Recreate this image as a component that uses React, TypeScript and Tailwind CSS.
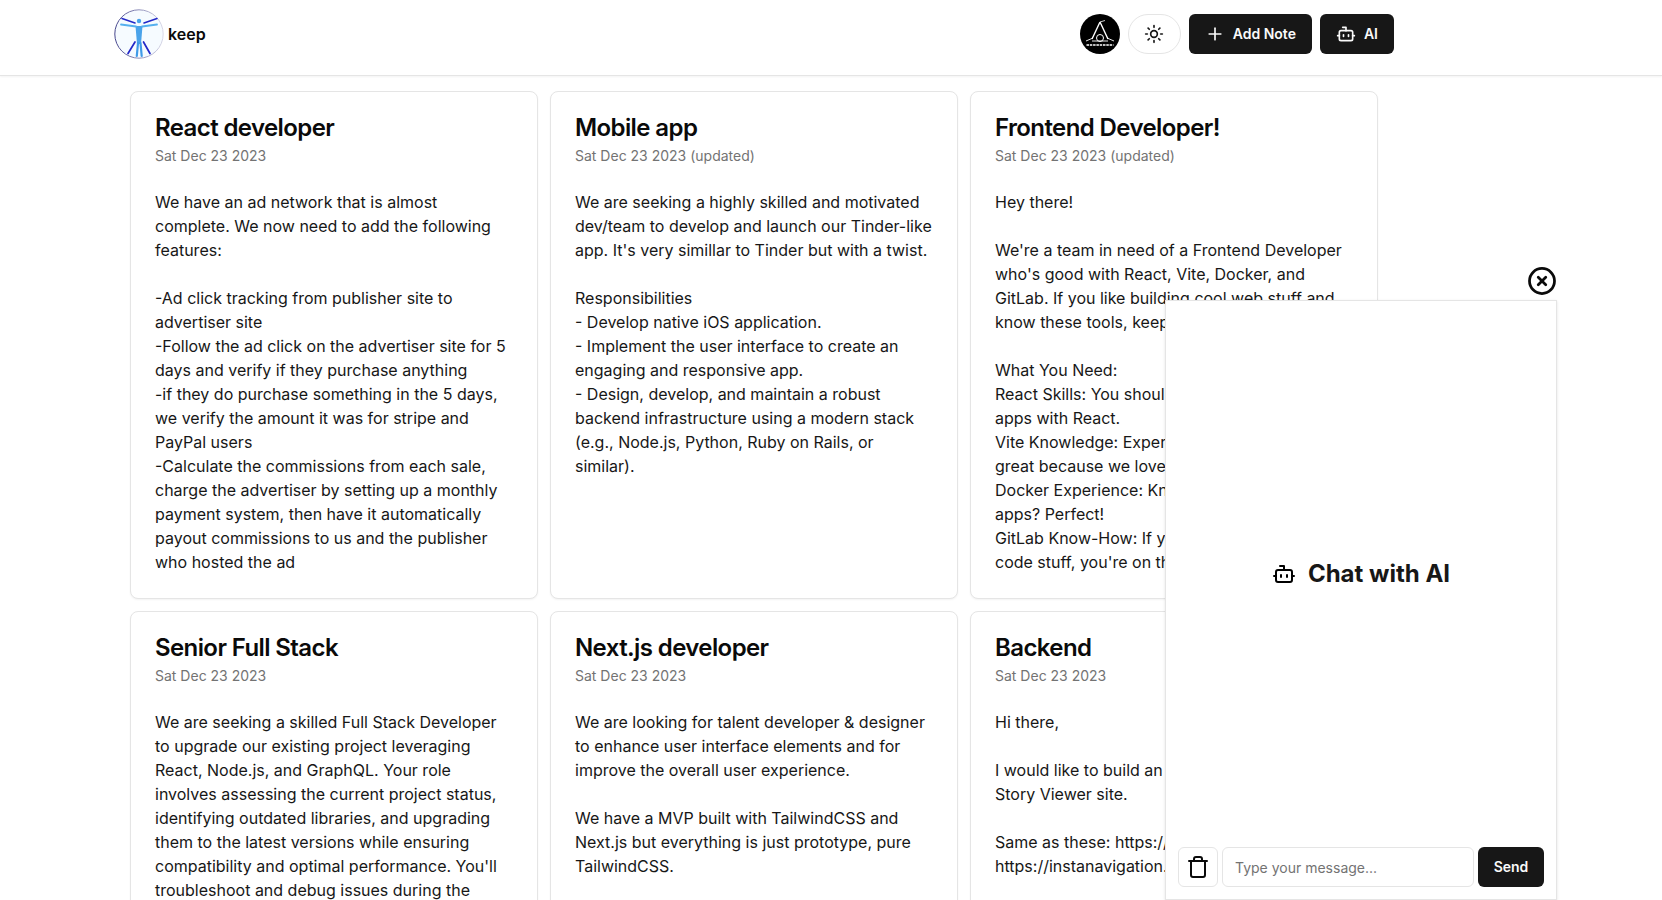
import { Bot, CircleX, Plus, Sun } from 'lucide-react'

interface Note {
  title: string
  date: string
  body: string
}

const notes: Note[] = [
  {
    title: 'React developer',
    date: 'Sat Dec 23 2023',
    body: `We have an ad network that is almost complete. We now need to add the following features:

-Ad click tracking from publisher site to advertiser site
-Follow the ad click on the advertiser site for 5 days and verify if they purchase anything
-if they do purchase something in the 5 days, we verify the amount it was for stripe and PayPal users
-Calculate the commissions from each sale, charge the advertiser by setting up a monthly payment system, then have it automatically payout commissions to us and the publisher who hosted the ad`,
  },
  {
    title: 'Mobile app',
    date: 'Sat Dec 23 2023 (updated)',
    body: `We are seeking a highly skilled and motivated dev/team to develop and launch our Tinder-like app. It's very simillar to Tinder but with a twist.

Responsibilities
- Develop native iOS application.
- Implement the user interface to create an engaging and responsive app.
- Design, develop, and maintain a robust backend infrastructure using a modern stack (e.g., Node.js, Python, Ruby on Rails, or similar).`,
  },
  {
    title: 'Frontend Developer!',
    date: 'Sat Dec 23 2023 (updated)',
    body: `Hey there!

We're a team in need of a Frontend Developer who's good with React, Vite, Docker, and GitLab. If you like building cool web stuff and know these tools, keep reading!

What You Need:
React Skills: You should know how to build apps with React.
Vite Knowledge: Experience with Vite is
great because we love it.
Docker Experience: Know how to use Docker apps? Perfect!
GitLab Know-How: If you can handle
code stuff, you're on the team.`,
  },
  {
    title: 'Senior Full Stack',
    date: 'Sat Dec 23 2023',
    body: `We are seeking a skilled Full Stack Developer to upgrade our existing project leveraging React, Node.js, and GraphQL. Your role involves assessing the current project status, identifying outdated libraries, and upgrading them to the latest versions while ensuring compatibility and optimal performance. You'll troubleshoot and debug issues during the`,
  },
  {
    title: 'Next.js developer',
    date: 'Sat Dec 23 2023',
    body: `We are looking for talent developer & designer to enhance user interface elements and for improve the overall user experience.

We have a MVP built with TailwindCSS and Next.js but everything is just prototype, pure TailwindCSS.`,
  },
  {
    title: 'Backend',
    date: 'Sat Dec 23 2023',
    body: `Hi there,

I would like to build an Instagram
Story Viewer site.

Same as these: https://storiesig.info
https://instanavigation.com`,
  },
]

function Logo() {
  return (
    <svg viewBox="0 0 50 50" className="w-[50px] h-[50px] shrink-0">
      <defs>
        <linearGradient id="ring" x1="0" y1="0" x2="1" y2="0">
          <stop offset="0" stopColor="#45458c" />
          <stop offset="1" stopColor="#d9d9e8" />
        </linearGradient>
      </defs>
      <circle cx="25" cy="25" r="24.2" fill="#f6fbff" stroke="url(#ring)" strokeWidth="1" />
      <g fill="none" strokeLinecap="round" strokeLinejoin="round">
        <circle cx="25" cy="12" r="2.2" fill="#4aa3ea" />
        <path d="M21.500 17h7l-1.500 18h-4z" fill="#4aa3ea" />
        <path d="M7 15.500l15 2M43 15.500l-15 2" stroke="#55b0ee" strokeWidth="1.800" />
        <path d="M8 9.500l13 4.500M43 9.500l-13 4.500" stroke="#2328c8" strokeWidth="1.500" />
        <path d="M24 34l-1.200 13M26.500 34l1.200 13" stroke="#3f9be8" strokeWidth="2.200" />
        <path d="M21 33l-7 11.500M29.500 33l6.500 11.500" stroke="#2328c8" strokeWidth="1.700" />
      </g>
    </svg>
  )
}

function Avatar() {
  return (
    <svg viewBox="0 0 40 40" className="w-10 h-10 shrink-0">
      <circle cx="20" cy="20" r="20" fill="#000" />
      <g fill="none" stroke="#fff">
        <path d="M20 8l-8 17M20 8l8 17" strokeWidth="1.400" />
        <path d="M20 8l5-1.500" strokeWidth="0.800" />
        <circle cx="20" cy="24" r="3.500" strokeWidth="1" />
        <path d="M6 27l7-3M34 27l-7-3M12 27h16" strokeWidth="0.900" />
        <path d="M6.500 31h27" strokeWidth="1.600" strokeDasharray="2.500 0.800" />
      </g>
    </svg>
  )
}

function TrashIcon() {
  return (
    <svg viewBox="0 0 24 24" className="w-6 h-6" fill="none" stroke="currentColor" strokeWidth="2" strokeLinecap="round" strokeLinejoin="round">
      <path d="M19 6v14a2 2 0 0 1-2 2H7a2 2 0 0 1-2-2V6" />
      <path d="M3 6h18" />
      <path d="M8 6V4a2 2 0 0 1 2-2h4a2 2 0 0 1 2 2v2" />
    </svg>
  )
}

function NoteCard({ note }: { note: Note }) {
  return (
    <div className="bg-white border border-[#e5e5e5] rounded-lg shadow-xs p-6 h-[508px] overflow-hidden">
      <h2 className="text-2xl leading-6 font-semibold tracking-tight text-[#0a0a0a]">{note.title}</h2>
      <p className="text-sm leading-5 text-[#737373] mt-[6px]">{note.date}</p>
      <p className="mt-6 text-base leading-6 text-[#171717] whitespace-pre-wrap">{note.body}</p>
    </div>
  )
}

export default function App() {
  return (
    <div className="relative h-screen overflow-hidden bg-white font-['Inter',sans-serif]">
      <header className="h-[76px] border-b border-[#e5e5e5] shadow-xs">
        <div className="ml-[114px] w-[1280px] h-full pb-[7px] flex items-center justify-between">
          <div className="flex items-center gap-1">
            <Logo />
            <span className="text-base font-semibold text-[#0a0a0a]">keep</span>
          </div>
          <div className="flex items-center gap-2">
            <Avatar />
            <button className="w-[53px] h-10 rounded-full border border-[#e5e5e5] flex items-center justify-center text-[#171717]">
              <Sun size={20} />
            </button>
            <button className="h-10 px-4 rounded-md bg-[#171717] text-[#fafafa] text-sm font-semibold flex items-center gap-2">
              <Plus size={20} />
              Add Note
            </button>
            <button className="h-10 px-4 rounded-md bg-[#171717] text-[#fafafa] text-sm font-semibold flex items-center gap-2">
              <Bot size={20} />
              AI
            </button>
          </div>
        </div>
      </header>

      <main className="ml-[130px] w-[1248px] mt-[15px] grid grid-cols-3 gap-3">
        {notes.map(note => (
          <NoteCard key={note.title} note={note} />
        ))}
      </main>

      <button className="absolute left-[1527px] top-[266px] text-[#0a0a0a]">
        <CircleX size={30} strokeWidth={2.2} />
      </button>

      <aside className="absolute left-[1165px] top-[300px] w-[392px] h-[600px] bg-white border border-[#e5e5e5] shadow-sm flex flex-col">
        <div className="flex-1 flex items-center justify-center gap-3">
          <Bot size={24} />
          <span className="text-2xl font-bold text-[#171717]">Chat with AI</span>
        </div>
        <div className="flex items-center gap-1 px-3 pb-3">
          <button className="w-10 h-10 shrink-0 rounded-md border border-[#e5e5e5] flex items-center justify-center text-[#0a0a0a]">
            <TrashIcon />
          </button>
          <input
            placeholder="Type your message..."
            className="flex-1 min-w-0 h-10 px-3 rounded-md border border-[#e5e5e5] text-sm placeholder:text-[#737373] outline-none"
          />
          <button className="h-10 w-[66px] rounded-md bg-[#171717] text-[#fafafa] text-sm font-semibold">Send</button>
        </div>
      </aside>
    </div>
  )
}
